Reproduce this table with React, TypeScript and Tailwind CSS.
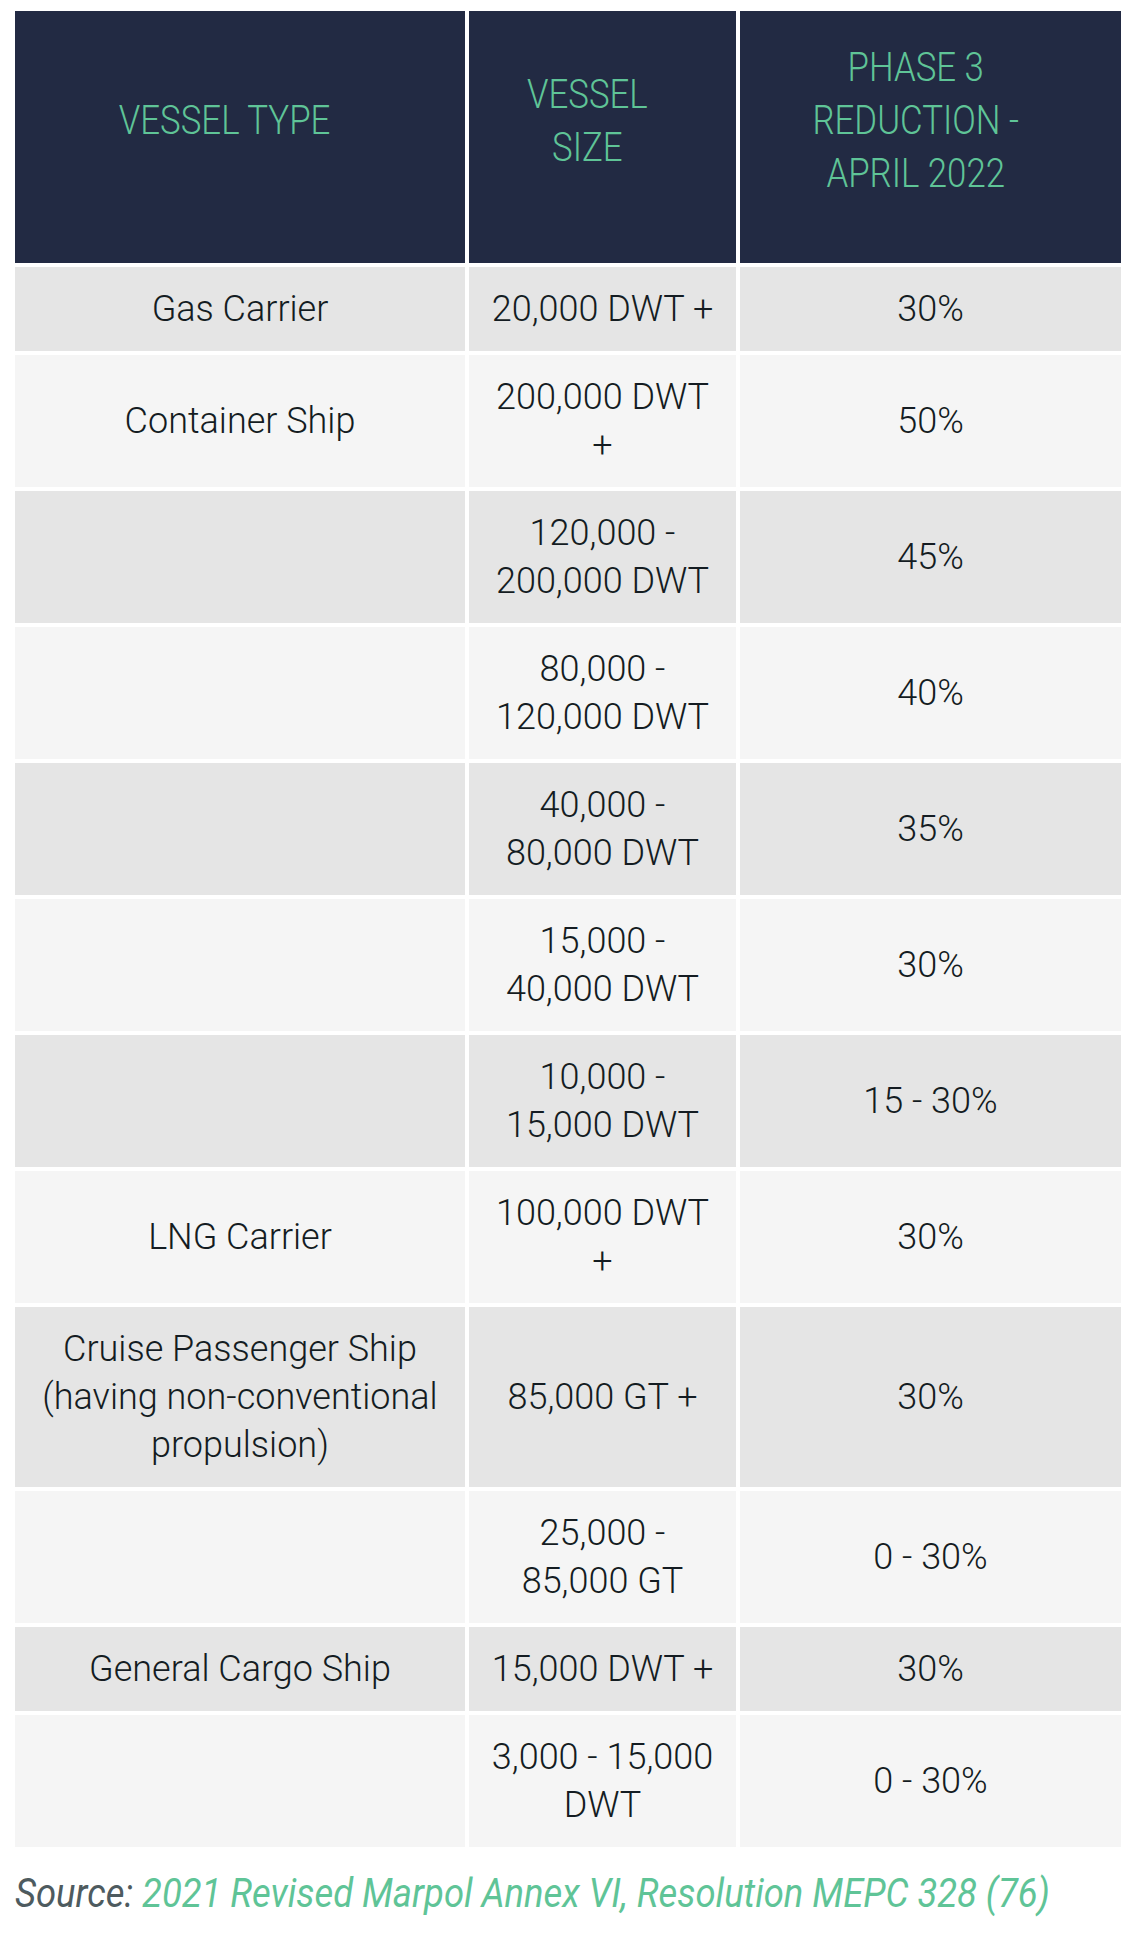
import React from "react";

type Row = { type: string; size: string; red: string };

const rows: Row[] = [
  { type: "Gas Carrier", size: "20,000 DWT +", red: "30%" },
  { type: "Container Ship", size: "200,000 DWT +", red: "50%" },
  { type: "", size: "120,000 - 200,000 DWT", red: "45%" },
  { type: "", size: "80,000 - 120,000 DWT", red: "40%" },
  { type: "", size: "40,000 - 80,000 DWT", red: "35%" },
  { type: "", size: "15,000 - 40,000 DWT", red: "30%" },
  { type: "", size: "10,000 - 15,000 DWT", red: "15 - 30%" },
  { type: "LNG Carrier", size: "100,000 DWT +", red: "30%" },
  { type: "Cruise Passenger Ship (having non-conventional propulsion)", size: "85,000 GT +", red: "30%" },
  { type: "", size: "25,000 - 85,000 GT", red: "0 - 30%" },
  { type: "General Cargo Ship", size: "15,000 DWT +", red: "30%" },
  { type: "", size: "3,000 - 15,000 DWT", red: "0 - 30%" },
];

function Head({ lines, pr }: { lines: string[]; pr: string }) {
  return (
    <div className={`bg-[#222a43] flex items-center justify-center pt-[30px] pb-[63px] ${pr}`}>
      <div className="inline-block scale-x-[0.87] text-center text-[40px] leading-[53px] font-light text-[#5fc497]">
        {lines.map((l, i) => (
          <div key={i} className="whitespace-nowrap">{l}</div>
        ))}
      </div>
    </div>
  );
}

function Cell({ text, dark }: { text: string; dark: boolean }) {
  return (
    <div
      className={`${dark ? "bg-[#e5e5e5]" : "bg-[#f5f5f5]"} flex items-center justify-center text-center px-[15px] py-[18px] text-[36px] leading-[48px] font-light text-[#141c22]`}
    >
      {text}
    </div>
  );
}

export default function App() {
  return (
    <div className="w-[1130px] min-h-[1934px] bg-white pt-[11px] px-[15px]" style={{ fontFamily: "Roboto, 'Noto Sans', sans-serif" }}>
      <div className="grid grid-cols-[450px_267px_381px] gap-[4px]">
        <Head lines={["VESSEL TYPE"]} pr="pr-[30px]" />
        <Head lines={["VESSEL", "SIZE"]} pr="pr-[30px]" />
        <Head lines={["PHASE 3", "REDUCTION -", "APRIL 2022"]} pr="pr-[30px]" />
        {rows.map((r, i) => (
          <React.Fragment key={i}>
            <Cell text={r.type} dark={i % 2 === 0} />
            <Cell text={r.size} dark={i % 2 === 0} />
            <Cell text={r.red} dark={i % 2 === 0} />
          </React.Fragment>
        ))}
      </div>
      <p className="mt-[23px] inline-block origin-left scale-x-[0.91] whitespace-nowrap italic font-normal text-[40px] leading-[48px]">
        <span className="text-[#4e5b5f]">Source: </span>
        <span className="text-[#5fc497]">2021 Revised Marpol Annex VI, Resolution MEPC 328 (76)</span>
      </p>
    </div>
  );
}
